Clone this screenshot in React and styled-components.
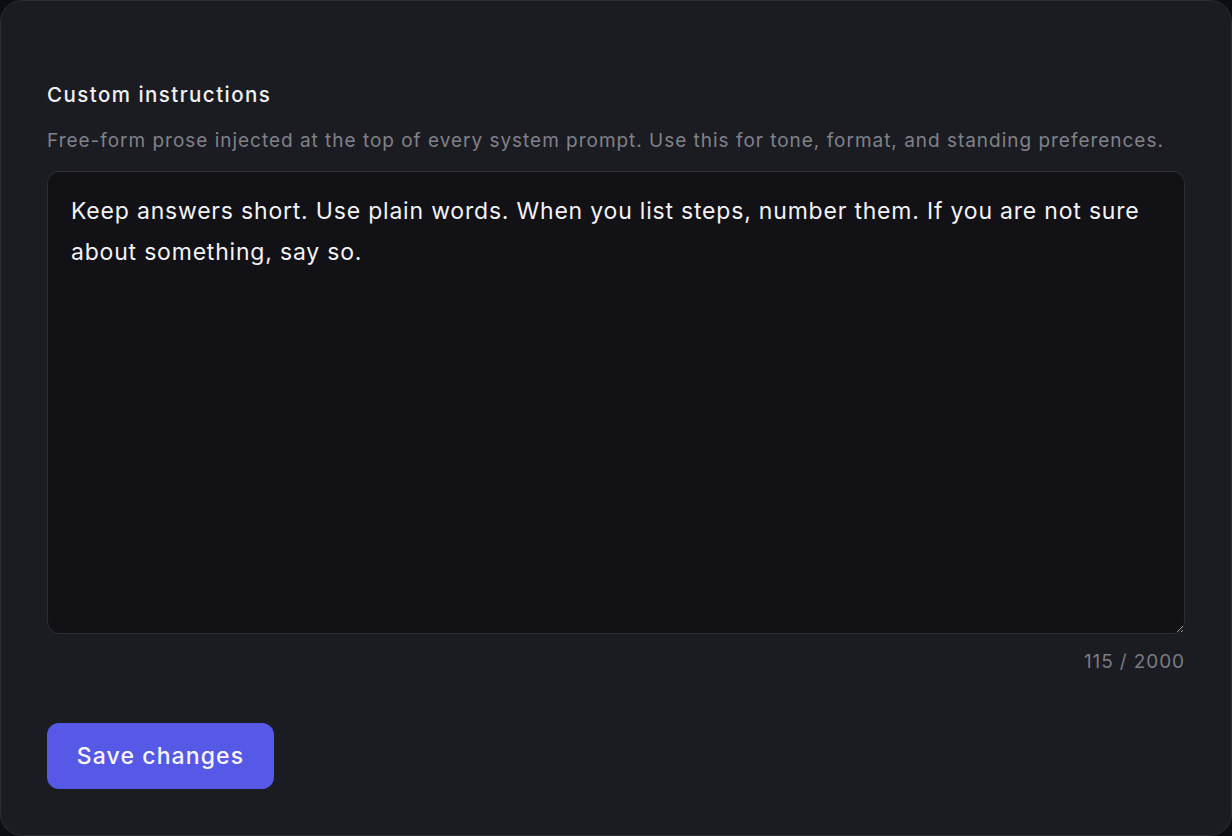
import React, { useState } from "react";
import styled, { createGlobalStyle } from "styled-components";

const Global = createGlobalStyle`
  html, body { margin: 0; padding: 0; background: #0d0e12; }
  body { font-family: Inter, "Noto Sans", sans-serif; -webkit-font-smoothing: antialiased; }
  #root { height: 836px; }
`;

const Card = styled.div`
  box-sizing: border-box;
  width: 1232px;
  height: 836px;
  background: #1b1c21;
  border: 1px solid #2c2d35;
  border-radius: 22px;
  padding: 80px 46px 0 46px;
  display: flex;
  flex-direction: column;
`;

const Title = styled.h2`
  margin: 0;
  font-size: 20.5px;
  font-weight: 500;
  letter-spacing: 1.45px;
  color: #f1f1f4;
  line-height: 28px;
`;

const Description = styled.p`
  margin: 20px 0 0 0;
  font-size: 19px;
  letter-spacing: 0.98px;
  line-height: 24px;
  color: #80818a;
`;

const TextArea = styled.textarea`
  box-sizing: border-box;
  margin-top: 18px;
  width: 100%;
  height: 463px;
  background: #111116;
  border: 1px solid #2d2e36;
  border-radius: 12px;
  padding: 19px 23px;
  color: #f3f3f6;
  font-family: Inter, "Noto Sans", sans-serif;
  font-size: 23px;
  letter-spacing: 0.8px;
  line-height: 41px;
  resize: vertical;
  outline: none;
  color-scheme: dark;
`;

const Counter = styled.div`
  margin-top: 16px;
  text-align: right;
  font-size: 19px;
  letter-spacing: 0.9px;
  line-height: 24px;
  color: #7a7b84;
`;

const Button = styled.button`
  margin-top: 49px;
  align-self: flex-start;
  width: 227px;
  height: 66px;
  border: none;
  border-radius: 12px;
  background: #5659e6;
  color: #f7f7fb;
  font-family: Inter, "Noto Sans", sans-serif;
  font-size: 23px;
  letter-spacing: 1.1px;
  font-weight: 500;
  cursor: pointer;
`;

export default function App() {
  const [text, setText] = useState(
    "Keep answers short. Use plain words. When you list steps, number them. If you are not sure about something, say so."
  );
  return (
    <>
      <Global />
      <Card>
        <Title>Custom instructions</Title>
        <Description>
          Free-form prose injected at the top of every system prompt. Use this for tone, format, and standing preferences.
        </Description>
        <TextArea value={text} onChange={(e) => setText(e.target.value)} />
        <Counter>{text.length} / 2000</Counter>
        <Button>Save changes</Button>
      </Card>
    </>
  );
}
